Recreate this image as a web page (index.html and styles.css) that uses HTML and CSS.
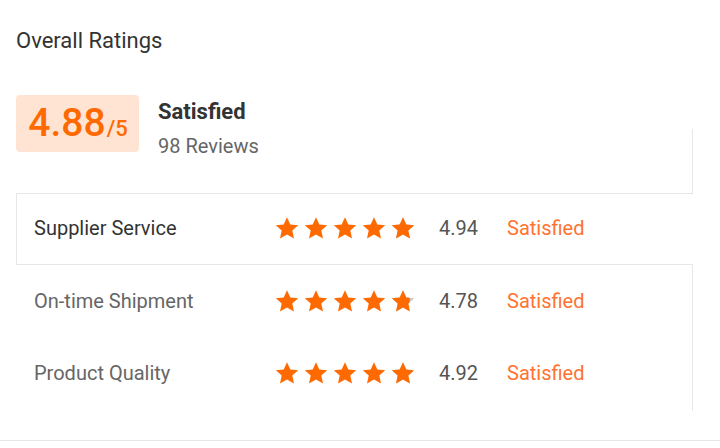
FILE: index.html
```html
<!DOCTYPE html>
<html>
<head>
<meta charset="utf-8">
<link rel="stylesheet" href="styles.css">
</head>
<body>
<svg width="0" height="0" class="defs">
  <defs>
    <symbol id="star" viewBox="0 0 24 24">
      <path d="M12 1.2l3.3 7.3 7.9.8-5.9 5.3 1.7 7.8L12 18.4l-7 4 1.7-7.8L.8 9.3l7.9-.8z"/>
    </symbol>
    <clipPath id="c94"><rect x="0" y="0" width="22.6" height="24"/></clipPath>
    <clipPath id="c78"><rect x="0" y="0" width="18.7" height="24"/></clipPath>
    <clipPath id="c92"><rect x="0" y="0" width="22.1" height="24"/></clipPath>
  </defs>
</svg>
<div class="card">
  <h2 class="title">Overall Ratings</h2>
  <div class="overview">
    <div class="score"><span class="big">4.88</span><span class="small">/5</span></div>
    <div class="info">
      <div class="status">Satisfied</div>
      <div class="reviews">98 Reviews</div>
    </div>
    <div class="edge"></div>
  </div>
  <div class="row active">
    <div class="label">Supplier Service</div>
    <div class="stars">
      <svg class="star" viewBox="0 0 24 24"><use href="#star"/></svg>
      <svg class="star" viewBox="0 0 24 24"><use href="#star"/></svg>
      <svg class="star" viewBox="0 0 24 24"><use href="#star"/></svg>
      <svg class="star" viewBox="0 0 24 24"><use href="#star"/></svg>
      <svg class="star" viewBox="0 0 24 24"><use href="#star" class="empty"/><g clip-path="url(#c94)"><use href="#star"/></g></svg>
    </div>
    <div class="num">4.94</div>
    <div class="verdict">Satisfied</div>
  </div>
  <div class="rows">
    <div class="row">
      <div class="label">On-time Shipment</div>
      <div class="stars">
        <svg class="star" viewBox="0 0 24 24"><use href="#star"/></svg>
        <svg class="star" viewBox="0 0 24 24"><use href="#star"/></svg>
        <svg class="star" viewBox="0 0 24 24"><use href="#star"/></svg>
        <svg class="star" viewBox="0 0 24 24"><use href="#star"/></svg>
        <svg class="star" viewBox="0 0 24 24"><use href="#star" class="empty"/><g clip-path="url(#c78)"><use href="#star"/></g></svg>
      </div>
      <div class="num">4.78</div>
      <div class="verdict">Satisfied</div>
    </div>
    <div class="row">
      <div class="label">Product Quality</div>
      <div class="stars">
        <svg class="star" viewBox="0 0 24 24"><use href="#star"/></svg>
        <svg class="star" viewBox="0 0 24 24"><use href="#star"/></svg>
        <svg class="star" viewBox="0 0 24 24"><use href="#star"/></svg>
        <svg class="star" viewBox="0 0 24 24"><use href="#star"/></svg>
        <svg class="star" viewBox="0 0 24 24"><use href="#star" class="empty"/><g clip-path="url(#c92)"><use href="#star"/></g></svg>
      </div>
      <div class="num">4.92</div>
      <div class="verdict">Satisfied</div>
    </div>
  </div>
</div>
</body>
</html>
```
FILE: styles.css
```css
html, body {
  margin: 0;
  padding: 0;
  background: #fff;
}
body {
  font-family: Roboto, "Liberation Sans", Arial, sans-serif;
  color: #333;
  width: 720px;
  height: 448px;
  overflow: hidden;
}
.defs {
  position: absolute;
  width: 0;
  height: 0;
}
.card {
  border-bottom: 1px solid #e6e6e6;
  padding-bottom: 29px;
}
.title {
  margin: 0;
  padding: 26px 0 0 16px;
  font-size: 22px;
  font-weight: 400;
  line-height: 30px;
  color: #333;
  height: 41px;
}
.overview {
  display: flex;
  margin-left: 16px;
  width: 677px;
  height: 98px;
  border-bottom: 1px solid #e6e6e6;
  padding-top: 28px;
  box-sizing: content-box;
}
.score {
  width: 123px;
  height: 57px;
  flex: none;
  background: #ffe4d4;
  border-radius: 4px;
  display: flex;
  align-items: baseline;
  justify-content: center;
  padding-left: 1px;
  box-sizing: border-box;
  color: #ff6a00;
  line-height: 57px;
}
.big {
  font-size: 39px;
  font-weight: 500;
}
.small {
  font-size: 22px;
  font-weight: 500;
  margin-left: 1px;
}
.info {
  flex: 1;
  padding-left: 19px;
  padding-top: 3px;
}
.status {
  font-size: 22px;
  font-weight: 700;
  color: #333;
  line-height: 28px;
}
.reviews {
  font-size: 20px;
  color: #666;
  line-height: 28px;
  margin-top: 6px;
}
.edge {
  width: 0;
  margin-top: 34px;
  border-right: 1px solid #e6e6e6;
}
.row {
  display: flex;
  align-items: center;
  height: 72px;
  padding-left: 18px;
  font-size: 20px;
}
.row.active {
  margin-left: 16px;
  width: 677px;
  height: 71px;
  padding-left: 17px;
  padding-bottom: 2px;
  border-left: 1px solid #e6e6e6;
  border-bottom: 1px solid #e6e6e6;
  box-sizing: border-box;
}
.rows {
  width: 693px;
  box-sizing: border-box;
  border-right: 1px solid #e6e6e6;
  padding-left: 16px;
  padding-bottom: 2px;
}
.label {
  width: 241px;
  color: #666;
}
.active .label {
  color: #333;
}
.stars {
  display: flex;
  gap: 5px;
  width: 164px;
}
.star {
  width: 24px;
  height: 24px;
  fill: #ff6a00;
}
.star .empty {
  fill: #c8c8c8;
}
.num {
  width: 68px;
  color: #555;
}
.verdict {
  color: #ff7331;
}
```
